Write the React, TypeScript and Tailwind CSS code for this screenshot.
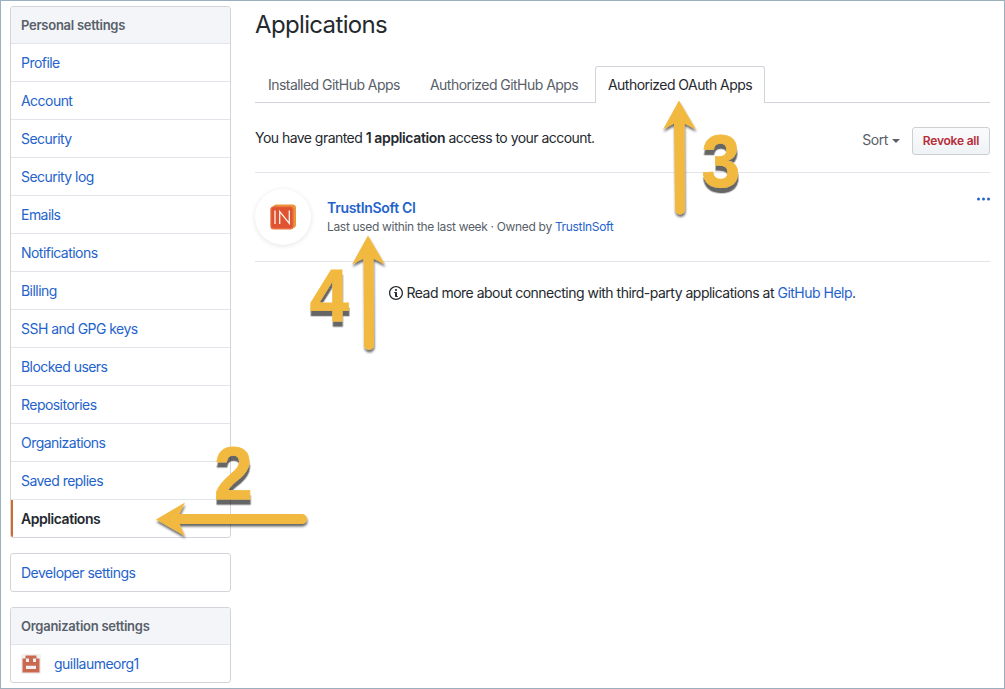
import React from "react";

const personalItems = [
  "Profile",
  "Account",
  "Security",
  "Security log",
  "Emails",
  "Notifications",
  "Billing",
  "SSH and GPG keys",
  "Blocked users",
  "Repositories",
  "Organizations",
  "Saved replies",
];

function MenuHeading({ children }: { children: React.ReactNode }) {
  return (
    <div className="flex h-[37px] items-center border-b border-[#e1e4e8] bg-[#f3f5f9] px-2.5 pt-px text-[13px] font-semibold tracking-[-0.26px] text-[#586069]">
      {children}
    </div>
  );
}

function Sidebar() {
  return (
    <aside className="flex w-[221px] shrink-0 flex-col gap-[15px] text-sm tracking-[-0.54px] text-[#2463cb]">
      <nav className="overflow-hidden rounded-[3px] border border-[#d1d5da]">
        <MenuHeading>Personal settings</MenuHeading>
        {personalItems.map((item) => (
          <a key={item} className="flex h-[38px] items-center border-b border-[#e1e4e8] px-2.5 pt-px">
            {item}
          </a>
        ))}
        <a className="flex h-[37px] items-center border-l-2 border-[#d26a2e] px-2 font-semibold tracking-[-0.45px] text-[#24292e]">
          Applications
        </a>
      </nav>
      <nav className="rounded-[3px] border border-[#d1d5da]">
        <a className="flex h-[37px] items-center px-2.5 tracking-[-0.5px]">Developer settings</a>
      </nav>
      <nav className="overflow-hidden rounded-[3px] border border-[#d1d5da]">
        <MenuHeading>Organization settings</MenuHeading>
        <a className="flex h-[37px] items-center gap-[13px] px-2.5 tracking-[-0.5px]">
          <OrgAvatar />
          guillaumeorg1
        </a>
      </nav>
    </aside>
  );
}

function OrgAvatar() {
  return (
    <svg width="20" height="20" viewBox="0 0 20 20">
      <rect width="20" height="20" rx="2" fill="#f0f0f0" />
      <path d="M4.500 1.5H15.500V4.5H18.500V18.5H1.500V4.5H4.500Z" fill="#cb6850" />
      <path d="M5 4.5H8V8H5ZM12 4.5H15V8H12ZM5 11.8H15V15H5Z" fill="#f0f0f0" />
    </svg>
  );
}

function AppLogo() {
  return (
    <div className="flex size-14 shrink-0 items-center justify-center rounded-full bg-white shadow-[0_1px_5px_rgba(27,31,35,0.12)]">
      <svg width="28" height="28" viewBox="0 0 28 28">
        <rect x="4" y="1.4" width="23" height="23.5" rx="3.5" fill="#ec9438" />
        <rect x="1.3" y="3.2" width="23.4" height="23.4" rx="3.5" fill="#e67042" />
        <rect x="2.4" y="4.3" width="21" height="20.8" rx="2.5" fill="#df5330" />
        <path d="M6 7.5V21M10.700 21V8.500L20.300 20.500V7.500" fill="none" stroke="#fff3ee" strokeWidth="1.3" />
      </svg>
    </div>
  );
}

function Tabs() {
  return (
    <div className="mt-[23px] flex h-[37px] border-b border-[#d1d5da] text-sm tracking-[-0.54px] text-[#586069]">
      <a className="flex w-[163px] items-center pl-[13px] pt-px">Installed GitHub Apps</a>
      <a className="flex w-[177px] items-center pl-3 pt-px">Authorized GitHub Apps</a>
      <a className="flex h-[37px] w-[170px] items-center whitespace-nowrap rounded-t-[3px] border border-b-0 border-[#d1d5da] bg-white pl-3 text-[#24292e]">
        Authorized OAuth Apps
      </a>
    </div>
  );
}

function Main() {
  return (
    <main className="w-[735px] whitespace-nowrap text-sm tracking-[-0.51px] text-[#24292e]">
      <h1 className="mt-px h-9 text-2xl leading-9 tracking-[-0.65px]">Applications</h1>
      <Tabs />
      <div className="flex h-[70px] items-center border-b border-[#e1e4e8] pt-[7px]">
        <p className="-mt-1.5 grow tracking-[-0.535px]">
          You have granted <strong className="font-semibold tracking-[-0.38px]">1 application</strong> access to your
          account.
        </p>
        <span className="-mt-0.5 tracking-[-0.4px] text-[#586069]">Sort</span>
        <span className="ml-1 border-x-4 border-t-4 border-x-transparent border-t-[#586069]" />
        <button className="ml-3 h-7 w-[78px] rounded-[3px] border border-[#cdcfd1] bg-linear-to-b from-[#fafbfc] to-[#eff3f6] text-xs font-semibold tracking-[-0.22px] text-[#b72c38]">
          Revoke all
        </button>
      </div>
      <div className="flex h-[89px] items-center border-b border-[#e1e4e8]">
        <AppLogo />
        <div className="ml-4 grow">
          <div className="-mt-px h-5 font-semibold leading-5 tracking-[-0.31px] text-[#2463cb]">TrustInSoft CI</div>
          <div className="text-xs leading-[18px] tracking-[-0.325px] text-[#586069]">
            Last used within the last week · Owned by <a className="text-[#2463cb]">TrustInSoft</a>
          </div>
        </div>
        <svg className="mb-[36px]" width="13" height="4" viewBox="0 0 13 4" fill="#2463cb">
          <circle cx="1.5" cy="2" r="1.5" />
          <circle cx="6.5" cy="2" r="1.5" />
          <circle cx="11.5" cy="2" r="1.5" />
        </svg>
      </div>
      <div className="flex items-center justify-center pt-[21px]">
        <svg className="mr-[3px]" width="14" height="16" viewBox="0 0 14 16" fill="#24292e">
          <path
            fillRule="evenodd"
            d="M6.3 5.69a.942.942 0 0 1-.28-.7c0-.28.09-.52.28-.7.19-.18.42-.28.7-.28.28 0 .52.09.7.28.18.19.28.42.28.7 0 .28-.09.52-.28.7a1 1 0 0 1-.7.3c-.28 0-.52-.11-.7-.3zM8 7.99c-.02-.25-.11-.48-.31-.69-.2-.19-.42-.3-.69-.31H6c-.27.02-.48.13-.69.31-.2.2-.3.44-.31.69h1v3c.02.27.11.5.31.69.2.2.42.31.69.31h1c.27 0 .48-.11.69-.31.2-.19.3-.42.31-.69H8V7.98v.01zM7 2.3c-3.14 0-5.7 2.54-5.7 5.68 0 3.14 2.56 5.7 5.7 5.7s5.7-2.55 5.7-5.7c0-3.15-2.56-5.69-5.7-5.69v.01zM7 .98c3.86 0 7 3.14 7 7s-3.14 7-7 7-7-3.12-7-7 3.14-7 7-7z"
          />
        </svg>
        <span>
          Read more about connecting with third-party applications at{" "}
          <a className="text-[#2463cb]">GitHub Help</a>.
        </span>
      </div>
    </main>
  );
}

function Annotations() {
  return (
    <svg className="pointer-events-none absolute -left-px -top-px" width="1005" height="689" viewBox="0 0 1005 689">
      <defs>
        <filter id="drop" x="-20%" y="-20%" width="140%" height="150%">
          <feDropShadow dx="0.5" dy="2.5" stdDeviation="0.9" floodColor="#000" floodOpacity="0.6" />
        </filter>
        <filter id="digitDrop" x="-20%" y="-20%" width="140%" height="150%">
          <feDropShadow dx="0.5" dy="5.3" stdDeviation="0.7" floodColor="#000" floodOpacity="0.6" />
        </filter>
      </defs>
      <g fill="#f2b93f" filter="url(#drop)">
        <path d="M156 519.5L185 502.5L179.500 514H302A5 5 0 0 1 302 524H179.500L185 536Z" />
      </g>
      <g fill="#f2b93f" filter="url(#drop)">
        <path d="M679 100.500L696 129.500L684.500 123.500L685 209.500A5 5 0 0 1 675 209.500L674 123.500L663 129.500Z" />
      </g>
      <g fill="#f2b93f" filter="url(#drop)">
        <path d="M368 235.500L385 264.500L373.500 258.500L374 345A5 5 0 0 1 364 345L363.500 258.500L352 264.500Z" />
      </g>
      <g className="font-['Liberation_Sans',sans-serif] text-[74px] font-bold" fill="#f2b93f" stroke="#f2b93f" strokeWidth="0.8">
        <text transform="translate(214 498.600) scale(0.94 1)" filter="url(#digitDrop)">2</text>
        <text transform="translate(701.500 187) scale(0.94 1)" filter="url(#digitDrop)">3</text>
        <text transform="translate(309.800 321.300) scale(0.95 1)" filter="url(#digitDrop)">4</text>
      </g>
    </svg>
  );
}

export default function App() {
  return (
    <div className="relative flex h-[689px] w-[1005px] gap-6 overflow-hidden border border-[#9bb0bc] bg-white pl-[9px] pt-[5px] font-[Inter,sans-serif]">
      <Sidebar />
      <Main />
      <Annotations />
    </div>
  );
}
